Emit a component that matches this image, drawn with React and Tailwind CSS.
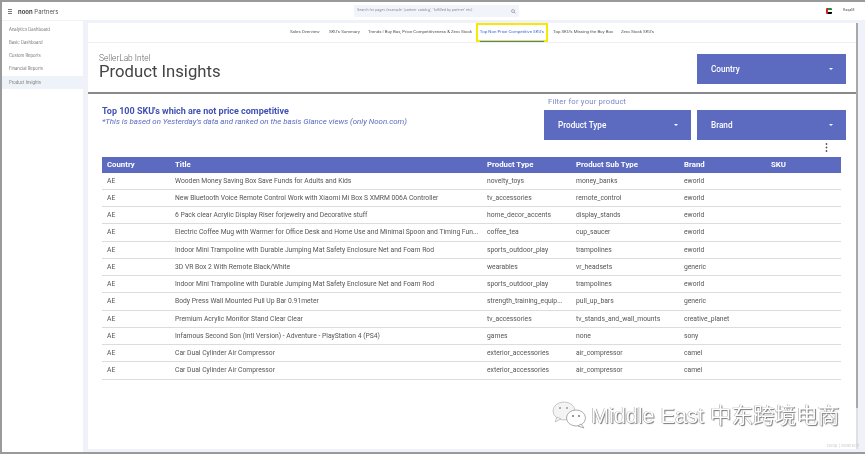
import React from "react";

const rows = [
  ["AE","Wooden Money Saving Box Save Funds for Adults and Kids","novelty_toys","money_banks","eworld"],
  ["AE","New Bluetooth Voice Remote Control Work with Xiaomi Mi Box S XMRM 006A Controller","tv_accessories","remote_control","eworld"],
  ["AE","6 Pack clear Acrylic Display Riser forjewelry and Decorative stuff","home_decor_accents","display_stands","eworld"],
  ["AE","Electric Coffee Mug with Warmer for Office Desk and Home Use and Minimal Spoon and Timing Fun...","coffee_tea","cup_saucer","eworld"],
  ["AE","Indoor Mini Trampoline with Durable Jumping Mat Safety Enclosure Net and Foam Rod","sports_outdoor_play","trampolines","eworld"],
  ["AE","3D VR Box 2 With Remote Black/White","wearables","vr_headsets","generic"],
  ["AE","Indoor Mini Trampoline with Durable Jumping Mat Safety Enclosure Net and Foam Rod","sports_outdoor_play","trampolines","eworld"],
  ["AE","Body Press Wall Mounted Pull Up Bar 0.91meter","strength_training_equip...","pull_up_bars","generic"],
  ["AE","Premium Acrylic Monitor Stand Clear Clear","tv_accessories","tv_stands_and_wall_mounts","creative_planet"],
  ["AE","Infamous Second Son (Intl Version) - Adventure - PlayStation 4 (PS4)","games","none","sony"],
  ["AE","Car Dual Cylinder Air Compressor","exterior_accessories","air_compressor","camel"],
  ["AE","Car Dual Cylinder Air Compressor","exterior_accessories","air_compressor","camel"],
];
const tabs = [
  ["Sales Overview","w-[39px]"],
  ["SKU's Summary","w-[39px]"],
  ["Trends | Buy Box, Price Competitiveness & Zero Stock","w-[108px]"],
];
const grid = "grid grid-cols-[68px_312px_89px_108px_87px_75px]";

function Dropdown({ label, w }) {
  return (
    <div className={`${w} h-[30px] bg-[#5c6bc0] flex items-center justify-between pl-[14px] pr-[13px] text-white text-[8.2px] font-medium`}>
      <span>{label}</span>
      <span className="w-0 h-0 border-x-[2.5px] border-x-transparent border-t-[2.5px] border-t-white" />
    </div>
  );
}

export default function App() {
  return (
    <div className="relative w-[865px] h-[454px] overflow-hidden bg-[#f0f2fa] font-['Roboto',sans-serif] border-t-2 border-l-2 border-b-2 border-[#9a9a9a] text-[#424242] blur-[0.35px]">
      <header className="h-[18px] bg-white flex items-center font-['Inter',sans-serif]">
        <div className="w-[14px] pl-[6px] flex flex-col gap-[1px]">
          <i className="block w-[4px] h-[1px] bg-[#777]" /><i className="block w-[4px] h-[1px] bg-[#777]" /><i className="block w-[4px] h-[1px] bg-[#777]" />
        </div>
        <div className="ml-[2px] w-[336px] text-[6px] text-[#555] whitespace-nowrap"><b className="font-semibold text-[#333]">noon</b> Partners</div>
        <div className="w-[165px] h-[12px] bg-[#f2f4fb] flex items-center justify-between px-[3px] text-[3.5px] text-[#888]">
          <span>Search for pages (example: 'partner catalog', 'fulfilled by partner' etc)</span>
          <svg width="5" height="5" viewBox="0 0 10 10"><circle cx="4" cy="4" r="3" fill="none" stroke="#999" strokeWidth="1.5" /><path d="M6 6l3 3" stroke="#999" strokeWidth="1.5" /></svg>
        </div>
        <div className="ml-auto flex items-center mr-[1px]">
          <div className="w-[6px] h-[6px] flex mr-[11px] rounded-[1px] overflow-hidden">
            <i className="w-[2px] bg-[#d3202a]" />
            <div className="flex-1 flex flex-col"><i className="flex-1 bg-[#1f8f3a]" /><i className="flex-1 bg-white" /><i className="flex-1 bg-black" /></div>
          </div>
          <span className="text-[3.5px] text-[#555] w-[21px]">RaqaM</span>
        </div>
      </header>
      <div className="flex h-[432px] mt-[1px]">
        <aside className="w-[81px] bg-white pt-[2px] shrink-0 text-[4.2px] text-[#777] font-['Inter',sans-serif]">
          {["Analytics Dashboard","Basic Dashboard","Custom Reports","Financial Reports"].map(t => (
            <div key={t} className="h-[13.3px] flex items-center pl-[7px]">{t}</div>
          ))}
          <div className="h-[13.3px] flex items-center pl-[7px] bg-[#eef2f9]">Product Insights</div>
        </aside>
        <main className="ml-[5px] mt-[2px] h-[426px] w-[768px] bg-white flex flex-col shrink-0">
          <nav className="relative h-[20px] border-b border-[#eceef2] flex items-center text-[4.4px] text-[#555] whitespace-nowrap pl-[202px]">
            {tabs.map(([t, w]) => <span key={t} className={w}>{t}</span>)}
            <span className="w-[72px] h-[19px] border-2 border-[#f5e90a] flex items-center justify-center text-[#3f6fd8] relative">
              Top Non Price Competitive SKU's
              <i className="absolute left-[2px] right-[2px] bottom-[-2px] h-[1px] bg-[#3f7be0]" />
            </span>
            <span className="ml-[5px] w-[66px]">Top SKU's Missing the Buy Box</span>
            <span className="ml-[2px]">Zero Stock SKU's</span>
          </nav>
          <section className="h-[51px] border-b-2 border-[#8a8a8a] flex items-start pl-[11px] pr-[10px] pt-[11px]">
            <div className="flex-1 -mt-[1px]">
              <div className="text-[8.4px] leading-[11px] text-[#666] font-light">SellerLab Intel</div>
              <div className="text-[16.7px] leading-[20px] text-[#444] mt-[-2px]">Product Insights</div>
            </div>
            <Dropdown label="Country" w="w-[149px]" />
          </section>
          <section className="relative h-[63px] pl-[14px] pr-[10px] flex">
            <div className="w-[442px] pt-[12px]">
              <div className="text-[9px] leading-[11px] font-bold text-[#3f51b5]">Top 100 SKU's which are not price competitive</div>
              <div className="text-[7.9px] leading-[10px] italic text-[#5c6bc0]">*This is based on Yesterday's data and ranked on the basis Glance views (only Noon.com)</div>
            </div>
            <div className="flex-1 pt-[2px]">
              <div className="pl-[4px] text-[7.7px] leading-[12px] text-[#7986cb] tracking-[0.2px]">Filter for your product</div>
              <div className="mt-[2px] flex gap-[6px]">
                <Dropdown label="Product Type" w="w-[147px]" />
                <Dropdown label="Brand" w="w-[149px]" />
              </div>
            </div>
            <svg className="absolute right-[28px] bottom-[5px]" width="3" height="9" viewBox="0 0 3 9"><circle cx="1.5" cy="1" r="0.9" fill="#555"/><circle cx="1.5" cy="4.5" r="0.9" fill="#555"/><circle cx="1.5" cy="8" r="0.9" fill="#555"/></svg>
          </section>
          <div className="ml-[14px] w-[739px]">
            <div className={`${grid} h-[15.5px] pt-[1px] bg-[#5c6bc0] items-center text-white text-[7.8px] font-bold`}>
              {["Country","Title","Product Type","Product Sub Type","Brand","SKU"].map(h => <div key={h} className="pl-[5px]">{h}</div>)}
            </div>
            {rows.map((r, i) => (
              <div key={i} className={`${grid} h-[17.25px] items-center border-b border-[#dcdcdc] text-[6.75px] text-[#555]`}>
                {r.map((c, j) => <div key={j} className="pl-[5px] whitespace-nowrap overflow-hidden">{c}</div>)}
                <div />
              </div>
            ))}
          </div>
        </main>
        <div className="w-[2px] h-[426px] mt-[2px] bg-[#dfe0e6] shrink-0">
          <div className="h-[385px] bg-[#a8a8a8]" />
        </div>
      </div>
      <div className="absolute left-[549px] top-[398px] flex items-center font-['Liberation_Sans','Noto_Sans_CJK_SC',sans-serif] text-white text-[21.6px] [text-shadow:1px_1px_1px_#777,-0.5px_-0.5px_0.5px_#999] whitespace-nowrap">
        <svg width="38" height="30" viewBox="0 0 38 30" className="mr-[2px]">
          <ellipse cx="13" cy="10" rx="11" ry="9" fill="#f4f4f4" stroke="#bbb" strokeWidth="0.8" />
          <path d="M6 16l-2 5 6-3z" fill="#f4f4f4" stroke="#bbb" strokeWidth="0.8" />
          <ellipse cx="25" cy="17" rx="9.5" ry="8" fill="#fff" stroke="#999" strokeWidth="0.8" />
          <path d="M30 23l3 4-6-2z" fill="#fff" stroke="#999" strokeWidth="0.8" />
          <circle cx="9" cy="7" r="1" fill="#999" /><circle cx="16" cy="7" r="1" fill="#999" />
          <circle cx="22" cy="15" r="1" fill="#777" /><circle cx="28" cy="15" r="1" fill="#777" />
        </svg>
        <span>Middle East 中东跨境电商</span>
      </div>
      <div className="absolute right-[6px] bottom-[3px] text-[4px] text-[#ccc] font-['Inter',sans-serif]">Noop | SellerBolt</div>
    </div>
  );
}
